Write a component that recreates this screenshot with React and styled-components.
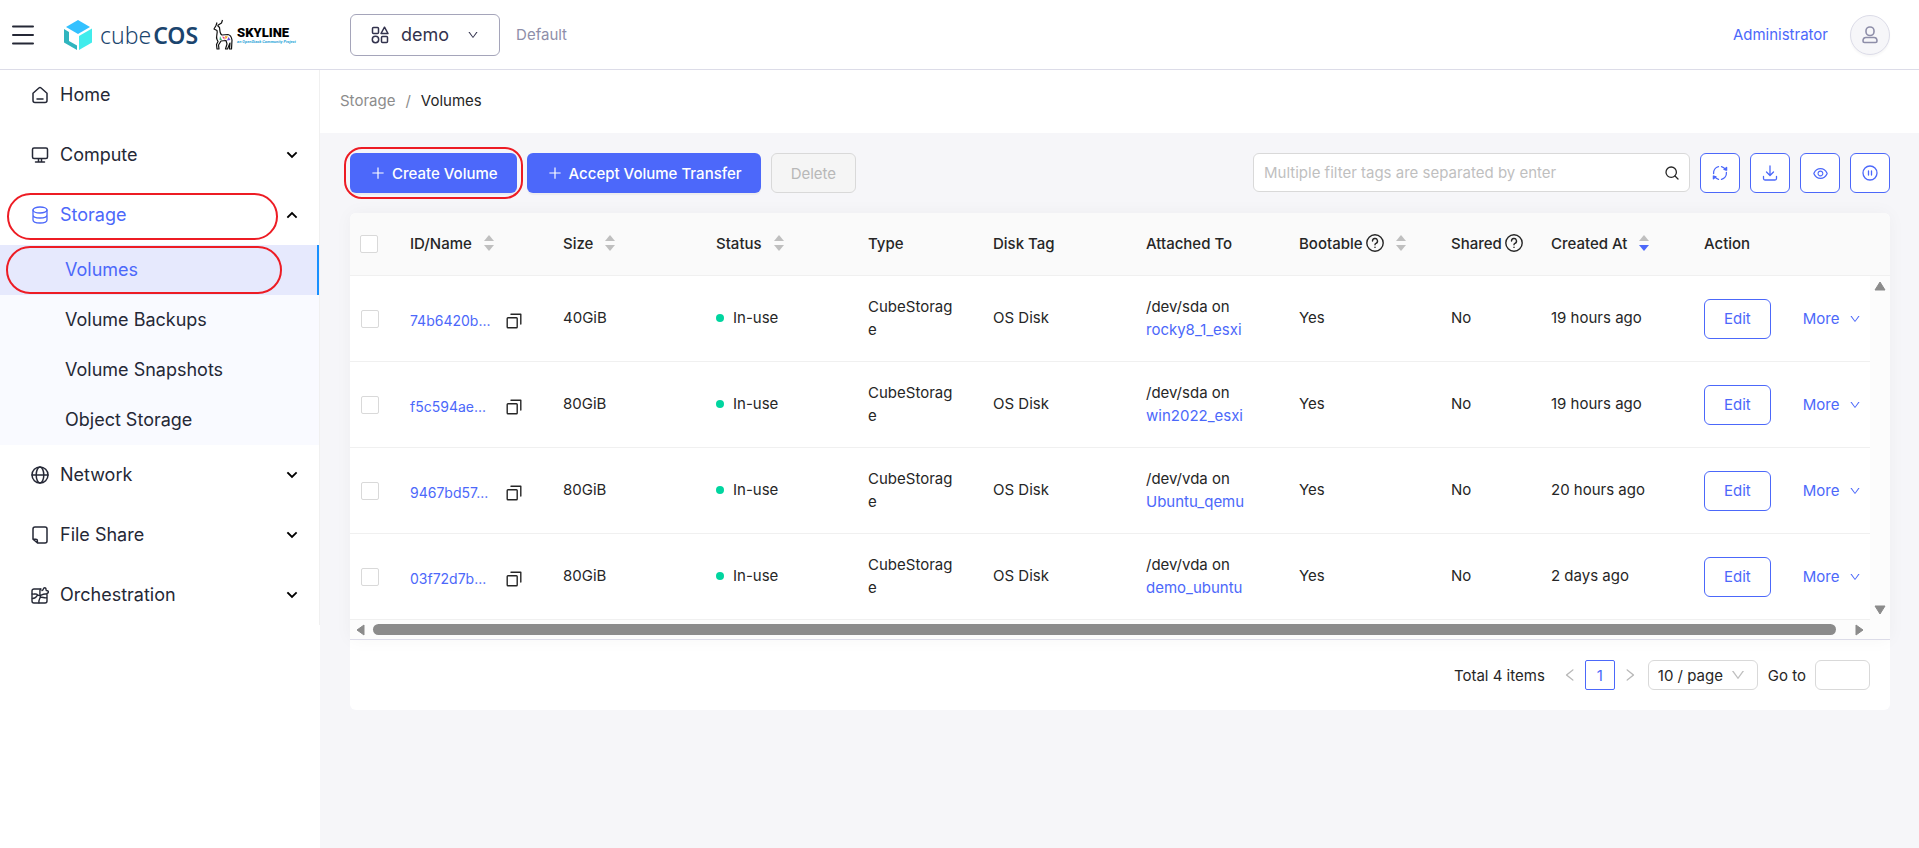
import React, { useState } from 'react'
import styled, { createGlobalStyle, css } from 'styled-components'
import { AiOutlineDown, AiOutlineLeft, AiOutlinePlus, AiOutlineRight, AiOutlineEye } from 'react-icons/ai'

const volumes = [
    { id: '74b6420b...', size: '40GiB', device: '/dev/sda', server: 'rocky8_1_esxi', created: '19 hours ago' },
    { id: 'f5c594ae...', size: '80GiB', device: '/dev/sda', server: 'win2022_esxi', created: '19 hours ago' },
    { id: '9467bd57...', size: '80GiB', device: '/dev/vda', server: 'Ubuntu_qemu', created: '20 hours ago' },
    { id: '03f72d7b...', size: '80GiB', device: '/dev/vda', server: 'demo_ubuntu', created: '2 days ago' },
]

const columns = [
    { title: 'ID/Name', width: 153, sort: true },
    { title: 'Size', width: 153, sort: true },
    { title: 'Status', width: 152, sort: true },
    { title: 'Type', width: 125 },
    { title: 'Disk Tag', width: 153 },
    { title: 'Attached To', width: 153 },
    { title: 'Bootable', width: 152, help: true, sort: true },
    { title: 'Shared', width: 100, help: true },
    { title: 'Created At', width: 153, sort: true, sorted: true },
    { title: 'Action', width: 176 },
]

const storageItems = ['Volumes', 'Volume Backups', 'Volume Snapshots', 'Object Storage']

// icons

const Line = ({ size = 18, width = 1.5, box = 18, children }) => (
    <svg
        width={size}
        height={size}
        viewBox={`0 0 ${box} ${box}`}
        fill="none"
        stroke="currentColor"
        strokeWidth={width}
        strokeLinecap="round"
        strokeLinejoin="round"
        aria-hidden="true"
    >
        {children}
    </svg>
)

const MenuIcon = () => (
    <Line size={24} box={24} width={2}>
        <path d="M2 3.500h20M2 12h20M2 20.500h20" />
    </Line>
)

const HomeIcon = () => (
    <Line>
        <path d="M2 7.2 7.9 2a1.7 1.7 0 0 1 2.2 0L16 7.2v7.3a2 2 0 0 1-2 2H4a2 2 0 0 1-2-2zM6 13h6" />
    </Line>
)

const ComputeIcon = () => (
    <Line>
        <rect x="1.5" y="2" width="15" height="10.5" rx="1.5" />
        <path d="M7.5 13v2.5M10.5 13v2.5M4.5 16h9" />
    </Line>
)

const StorageIcon = () => (
    <Line width={1.3}>
        <ellipse cx="9" cy="4" rx="7" ry="3" />
        <path d="M2 4v10c0 1.7 3.1 3 7 3s7-1.3 7-3V4M2 9c0 1.700 3.100 3 7 3s7-1.300 7-3" />
    </Line>
)

const NetworkIcon = () => (
    <Line>
        <circle cx="9" cy="9" r="8" />
        <ellipse cx="9" cy="9" rx="3.8" ry="8" />
        <path d="M1 9h16" />
    </Line>
)

const FileIcon = () => (
    <Line>
        <path d="M6.5 17H14a2 2 0 0 0 2-2V3a2 2 0 0 0-2-2H4a2 2 0 0 0-2 2v10.2L6.5 17zM2.3 13.2h2.6a1.5 1.5 0 0 1 1.5 1.5V17" />
    </Line>
)

const OrchestrationIcon = () => (
    <Line width={1.4}>
        <path d="M10 3H3a2 2 0 0 0-2 2v10a2 2 0 0 0 2 2h11a2 2 0 0 0 2-2V9" />
        <path d="M11 4.500c1-.2 1.200-.8 1.400-1.700.3-1.500 2.400-1.500 2.600 0 0 .8-.1 1.200.3 1.600s1 .3 1.500.5c.9.500.7 2-.4 2.300-.6.200-.8.600-.6 1.200" />
        <path d="M1.200 8c1.800.6 2.800-.6 4.300.2s1.800 1.500 3.500 1.300 2.800-2 6-1.500M9.500 3.200c-1.200 1.500-.3 2.600-.6 4s1 2.300.3 4.300-1.800 2.500-1.200 5.300M1.500 12.500c2 0 4-1.500 5-3.500M9.300 11.500c1.700-1 3.500.7 6.200.3" />
    </Line>
)

const ProjectIcon = () => (
    <Line>
        <rect x="1.5" y="1.5" width="6" height="6" rx="1" />
        <path d="M13.5 1.2 17 7.5h-7z" />
        <circle cx="4.5" cy="13.5" r="3.2" />
        <rect x="10.5" y="10.5" width="6" height="6" rx="1" />
    </Line>
)

const UserIcon = () => (
    <Line width={1.6}>
        <rect x="5" y="1" width="8" height="8.5" rx="3.8" />
        <path d="M5 11.5h8c1.6 0 3 1.5 3 3.5 0 1-.5 1.5-1.5 1.5h-11c-1 0-1.5-.5-1.5-1.5 0-2 1.4-3.5 3-3.5z" />
    </Line>
)

const ArrowIcon = ({ up }) => (
    <Line size={14} box={14} width={1.8}>
        <path d={up ? 'M3 9l4-4 4 4' : 'M3 5l4 4 4-4'} strokeLinecap="square" strokeLinejoin="miter" />
    </Line>
)

const SearchIcon = () => (
    <Line size={14} box={14} width={1.3}>
        <circle cx="6.2" cy="6.2" r="5.2" />
        <path d="M10 10l3 3" />
    </Line>
)

const RefreshIcon = () => (
    <Line size={16} box={16} width={1.3}>
        <path d="M6.5 14.3A6.5 6.5 0 0 1 2.600 11.500M1.6 8.500A6.5 6.5 0 0 1 6.5 1.7M9.500 1.700a6.5 6.5 0 0 1 4 3M14.400 7.500A6.500 6.500 0 0 1 9.500 14.300" />
        <path d="M14.600 2.400v2.800l-2.600-.8zM1.400 13.800v-2.800l2.600.8z" fill="currentColor" />
    </Line>
)

const DownloadIcon = () => (
    <Line size={16} box={16} width={1.3}>
        <path d="M8 1v9M4.5 7 8 10.5 11.5 7M1.5 11.5v2A1.5 1.5 0 0 0 3 15h10a1.5 1.5 0 0 0 1.5-1.5v-2" />
    </Line>
)

const PauseIcon = () => (
    <Line size={16} box={16} width={1.3}>
        <circle cx="8" cy="8" r="7" />
        <path d="M6.5 6v4M9.5 6v4" />
    </Line>
)

const QuestionIcon = () => (
    <Line width={1.4}>
        <circle cx="9" cy="9" r="8.2" />
        <path d="M6.5 7a2.5 2.5 0 1 1 3.5 2.3c-.7.3-1 .8-1 1.5M9 13.3v.1" />
    </Line>
)

const CopyIcon = () => (
    <Line size={16} box={16} width={1.4}>
        <rect x="1.2" y="4.8" width="10" height="10" rx=".8" />
        <path d="M5 1.2h9.8V11" />
    </Line>
)

const Triangle = ({ direction }) => {
    const points = {
        up: '7,3 12,11 2,11',
        down: '2,3 12,3 7,11',
        left: '4,7 11,2 11,12',
        right: '3,2 10,7 3,12',
    }
    return (
        <svg width="14" height="14" viewBox="0 0 14 14" fill="#8b8b8b" stroke="#8b8b8b" strokeLinejoin="round" aria-hidden="true">
            <polygon points={points[direction]} />
        </svg>
    )
}

const Sorter = ({ active }) => (
    <svg width="10" height="16" viewBox="0 0 10 16" aria-hidden="true">
        <path d="M5 0l5 6H0z" fill="#bfbfbf" />
        <path d="M5 16l5-6H0z" fill={active ? '#4c68fa' : '#bfbfbf'} />
    </svg>
)

const CubeLogo = () => (
    <svg width="28" height="30" viewBox="0 0 28 30" aria-hidden="true">
        <path d="M14 0l12 7-12 7L2 7z" fill="#33c1ff" />
        <path d="M0 9l5 3v9l8 4.500V30L0 22.500z" fill="#30b5be" />
        <path d="M15 16l13-7.500v14L15 30z" fill="#41ecec" />
    </svg>
)

const DeerLogo = () => (
    <svg width="20" height="31" viewBox="0 0 20 31" fill="none" stroke="#111" strokeWidth="1.2" strokeLinejoin="round" aria-hidden="true">
        <path d="M9.5 1 8.500 4 4.500 6.500M4 3.500 3 6.500 1 10l3 1.500c1 3-1.500 6 0 9l1 2-1.500 3 .5 4.500h2l-.5-4 2.500-4 5-.5 1 3.500-1.500 5h2l2.500-6-.5 6h2l.5-9c-.5-3-1.500-5-4-5.500L9 16c-2.500-1-2-5-2.500-7.500L4.500 6.500" />
        <path d="M9 17.500l2.500.5v3z" fill="#e63b7a" stroke="none" />
        <path d="M12 17l3 .5-2.500 3z" fill="#f5a623" stroke="none" />
        <path d="M15.500 18l2 3-3.500.5z" fill="#6a4bd8" stroke="none" />
        <path d="M7 17l2 4H6.500z" fill="#42b983" stroke="none" />
    </svg>
)

// components

const NavEntry = ({ icon, label, expanded, active, marked }) => (
    <NavButton type="button" $active={active} aria-expanded={expanded}>
        {icon}
        <NavLabel>{label}</NavLabel>
        {expanded !== undefined && <NavArrow><ArrowIcon up={expanded} /></NavArrow>}
        {marked && <StorageMark />}
    </NavButton>
)

const Sidebar = () => (
    <Aside>
        <Nav>
            <NavEntry icon={<HomeIcon />} label="Home" />
            <NavEntry icon={<ComputeIcon />} label="Compute" expanded={false} />
            <NavEntry icon={<StorageIcon />} label="Storage" expanded active marked />
            <SubNav>
                {storageItems.map((item) => (
                    <SubNavLink href="#" key={item} $active={item === 'Volumes'}>
                        {item}
                        {item === 'Volumes' && <VolumesMark />}
                    </SubNavLink>
                ))}
            </SubNav>
            <NavEntry icon={<NetworkIcon />} label="Network" expanded={false} />
            <NavEntry icon={<FileIcon />} label="File Share" expanded={false} />
            <NavEntry icon={<OrchestrationIcon />} label="Orchestration" expanded={false} />
        </Nav>
    </Aside>
)

const TopBar = () => (
    <Header>
        <MenuButton type="button" aria-label="Toggle menu"><MenuIcon /></MenuButton>
        <Brand href="#">
            <CubeLogo />
            <BrandName>cube<b>COS</b></BrandName>
            <DeerLogo />
            <Skyline>
                <strong>SKYLINE</strong>
                <em>an OpenStack Community Project</em>
            </Skyline>
        </Brand>
        <ProjectButton type="button">
            <ProjectIcon />
            <span>demo</span>
            <AiOutlineDown size={12} />
        </ProjectButton>
        <Region>Default</Region>
        <UserLink href="#">Administrator</UserLink>
        <Avatar type="button" aria-label="Account"><UserIcon /></Avatar>
    </Header>
)

const Columns = () => (
    <colgroup>
        <col width={50} />
        {columns.map((column) => <col key={column.title} width={column.width} />)}
    </colgroup>
)

const VolumeRow = ({ volume, checked, toggle }) => (
    <tr>
        <CheckCell>
            <Checkbox type="checkbox" aria-label={`Select ${volume.id}`} checked={checked} onChange={toggle} />
        </CheckCell>
        <Td>
            <IdBox>
                <Link href="#">{volume.id}</Link>
                <CopyButton type="button" aria-label="Copy ID"><CopyIcon /></CopyButton>
            </IdBox>
        </Td>
        <Td>{volume.size}</Td>
        <Td><Status>In-use</Status></Td>
        <TypeCell>CubeStorage</TypeCell>
        <Td>OS Disk</Td>
        <Td>{volume.device} on<br /><Link href="#">{volume.server}</Link></Td>
        <Td>Yes</Td>
        <Td>No</Td>
        <Td>{volume.created}</Td>
        <ActionCell>
            <Actions>
                <EditButton type="button">Edit</EditButton>
                <MoreButton type="button">More <AiOutlineDown size={12} /></MoreButton>
            </Actions>
        </ActionCell>
    </tr>
)

const VolumeTable = () => {
    const [selected, changeSelected] = useState([])
    const allSelected = selected.length === volumes.length

    const toggle = (id) => {
        changeSelected(selected.includes(id) ? selected.filter((item) => item !== id) : [...selected, id])
    }

    return (
        <TableBox>
            <TableHead>
                <Table>
                    <Columns />
                    <thead>
                        <tr>
                            <HeadCheckCell>
                                <Checkbox
                                    type="checkbox"
                                    aria-label="Select all"
                                    checked={allSelected}
                                    onChange={() => changeSelected(allSelected ? [] : volumes.map((v) => v.id))}
                                />
                            </HeadCheckCell>
                            {columns.map((column) => (
                                <Th key={column.title} scope="col">
                                    <HeadBox>
                                        <HeadTitle>{column.title}{column.help && <QuestionIcon />}</HeadTitle>
                                        {column.sort && <Sorter active={column.sorted} />}
                                    </HeadBox>
                                </Th>
                            ))}
                        </tr>
                    </thead>
                </Table>
            </TableHead>
            <TableBody>
                <Table>
                    <Columns />
                    <tbody>
                        {volumes.map((volume) => (
                            <VolumeRow
                                key={volume.id}
                                volume={volume}
                                checked={selected.includes(volume.id)}
                                toggle={() => toggle(volume.id)}
                            />
                        ))}
                    </tbody>
                </Table>
                <ScrollColumn>
                    <ScrollButton type="button" aria-label="Scroll up"><Triangle direction="up" /></ScrollButton>
                    <ScrollButton type="button" aria-label="Scroll down"><Triangle direction="down" /></ScrollButton>
                </ScrollColumn>
            </TableBody>
            <ScrollRow>
                <ScrollButton type="button" aria-label="Scroll left"><Triangle direction="left" /></ScrollButton>
                <ScrollThumb />
                <ScrollButton type="button" aria-label="Scroll right"><Triangle direction="right" /></ScrollButton>
            </ScrollRow>
        </TableBox>
    )
}

const Pagination = () => (
    <Pager>
        <span>Total 4 items</span>
        <PageArrows>
            <PageButton type="button" aria-label="Previous page"><AiOutlineLeft size={16} /></PageButton>
            <PageButton type="button" $current>1</PageButton>
            <PageButton type="button" aria-label="Next page"><AiOutlineRight size={16} /></PageButton>
        </PageArrows>
        <SelectBox>
            <PageSelect aria-label="Page size">
                <option>10 / page</option>
                <option>20 / page</option>
                <option>50 / page</option>
            </PageSelect>
            <AiOutlineDown size={16} />
        </SelectBox>
        <GoTo>
            Go to
            <GoToInput type="text" />
        </GoTo>
    </Pager>
)

const App = () => {
    const [filter, changeFilter] = useState('')

    return (
        <Page>
            <GlobalStyle />
            <TopBar />
            <Body>
                <Sidebar />
                <Main>
                    <Breadcrumb aria-label="Breadcrumb">
                        <a href="#">Storage</a>
                        <span>/</span>
                        <strong>Volumes</strong>
                    </Breadcrumb>
                    <Content>
                        <Toolbar>
                            <PrimaryButton type="button">
                                <AiOutlinePlus size={16} /> Create Volume
                                <CreateMark />
                            </PrimaryButton>
                            <PrimaryButton type="button"><AiOutlinePlus size={16} /> Accept Volume Transfer</PrimaryButton>
                            <DeleteButton type="button" disabled>Delete</DeleteButton>
                            <SearchBox>
                                <SearchInput
                                    type="text"
                                    aria-label="Filter volumes"
                                    placeholder="Multiple filter tags are separated by enter"
                                    value={filter}
                                    onChange={(e) => changeFilter(e.target.value)}
                                />
                                <SearchIcon />
                            </SearchBox>
                            <IconButton type="button" aria-label="Refresh"><RefreshIcon /></IconButton>
                            <IconButton type="button" aria-label="Download"><DownloadIcon /></IconButton>
                            <IconButton type="button" aria-label="Visible columns"><AiOutlineEye size={17} /></IconButton>
                            <IconButton type="button" aria-label="Pause updates"><PauseIcon /></IconButton>
                        </Toolbar>
                        <Card>
                            <VolumeTable />
                            <Pagination />
                        </Card>
                    </Content>
                </Main>
            </Body>
        </Page>
    )
}

const GlobalStyle = createGlobalStyle`
    * {
        box-sizing: border-box;
    }

    body {
        margin: 0;
        background: #f6f6f9;
        color: #262626;
        font-family: Inter, "Liberation Sans", sans-serif;
        font-size: 15px;
        line-height: 23px;
    }

    button, input, select {
        font: inherit;
        color: inherit;
    }

    button {
        cursor: pointer;
    }

    a {
        text-decoration: none;
    }

    svg {
        flex: none;
    }
`

const bareButton = css`
    display: flex;
    align-items: center;
    padding: 0;
    border: 0;
    background: none;
`

const Page = styled.div`
    display: flex;
    flex-direction: column;
    min-height: 100vh;
`

const Header = styled.header`
    display: flex;
    align-items: center;
    height: 70px;
    padding: 0 29px 0 11px;
    border-bottom: 1px solid #dcdce8;
    background: #fff;
`

const MenuButton = styled.button`
    ${bareButton}
    color: #252836;
`

const Brand = styled.a`
    display: flex;
    align-items: center;
    width: 286px;
    margin-left: 29px;
    color: #1b456e;
`

const BrandName = styled.span`
    margin: 0 15px 0 8px;
    font: 300 23px/30px "Noto Sans", "Open Sans", sans-serif;

    b {
        margin-left: 2px;
        font-weight: 600;
    }
`

const Skyline = styled.span`
    display: flex;
    flex-direction: column;
    margin-left: 4px;
    font-family: Roboto, sans-serif;

    strong {
        color: #000;
        font-size: 13px;
        font-weight: 900;
        line-height: 13px;
    }

    em {
        color: #2aa5d8;
        font-size: 4px;
        font-weight: 700;
        line-height: 5px;
        white-space: nowrap;
    }
`

const ProjectButton = styled.button`
    display: flex;
    align-items: center;
    gap: 12px;
    height: 42px;
    padding: 0 20px;
    border: 1px solid #a5a5ba;
    border-radius: 6px;
    background: #fff;
    color: #32324d;
    font-size: 18px;

    svg:last-child {
        margin-left: 6px;
    }
`

const Region = styled.span`
    margin-left: 16px;
    color: #8e8ea9;
`

const UserLink = styled.a`
    margin-left: auto;
    color: #4c68fa;
`

const Avatar = styled.button`
    display: flex;
    align-items: center;
    justify-content: center;
    width: 40px;
    height: 40px;
    margin-left: 22px;
    padding: 0;
    border: 1px solid #dcdce8;
    border-radius: 50%;
    background: #f6f6f9;
    color: #8e8ea9;
    box-shadow: 0 2px 2px rgba(0, 0, 0, 0.03);
`

const Body = styled.div`
    display: flex;
    flex: 1;
`

const Aside = styled.aside`
    flex: 0 0 320px;
    background: #fff;
`

const Nav = styled.nav`
    display: flex;
    flex-direction: column;
    gap: 10px;
    padding-bottom: 5px;
    border-right: 1px solid #f0f0f0;
`

const NavButton = styled.button`
    position: relative;
    display: flex;
    align-items: center;
    gap: 11px;
    height: 50px;
    padding: 0 20px 0 31px;
    border: 0;
    background: none;
    color: ${({ $active }) => ($active ? '#4c68fa' : '#252836')};
    font-size: 18px;
    text-align: left;
`

const NavLabel = styled.span`
    flex: 1;
    padding-bottom: 2px;
`

const NavArrow = styled.span`
    display: flex;
    color: #000;
`

const SubNav = styled.div`
    margin: -5px 0;
    background: #f9faff;
`

const SubNavLink = styled.a`
    position: relative;
    display: flex;
    align-items: center;
    height: 50px;
    padding: 0 0 2px 65px;
    border-right: 2px solid ${({ $active }) => ($active ? '#1890ff' : 'transparent')};
    background: ${({ $active }) => ($active ? '#e6e9fd' : 'none')};
    color: ${({ $active }) => ($active ? '#4c68fa' : '#252836')};
    font-size: 18px;
`

// red outlines drawn over the steps to follow
const Mark = styled.span`
    position: absolute;
    border: 2px solid #ed1c24;
    pointer-events: none;
`

const StorageMark = styled(Mark)`
    inset: 3px 41px 0 7px;
    border-radius: 28px;
`

const VolumesMark = styled(Mark)`
    inset: 1px 35px 1px 6px;
    border-radius: 28px;
`

const CreateMark = styled(Mark)`
    inset: -6px;
    border-radius: 18px;
`

const Main = styled.main`
    flex: 1;
    min-width: 0;
`

const Breadcrumb = styled.nav`
    display: flex;
    align-items: center;
    gap: 10px;
    height: 63px;
    padding: 0 0 2px 20px;
    background: #fff;
    color: #8c8c8c;

    a {
        color: inherit;
    }

    strong {
        color: #262626;
        font-weight: 400;
    }
`

const Content = styled.div`
    padding: 20px 29px 20px 30px;
`

const Toolbar = styled.div`
    display: flex;
    gap: 10px;
    margin-bottom: 20px;
`

const PrimaryButton = styled.button`
    position: relative;
    display: flex;
    align-items: center;
    gap: 6px;
    height: 40px;
    padding: 0 19px 0 20px;
    border: 0;
    border-radius: 6px;
    background: #4c68fa;
    color: #fff;
    font-weight: 500;
    white-space: nowrap;
    box-shadow: 0 2px 1px rgba(0, 0, 0, 0.04);
`

const DeleteButton = styled.button`
    height: 40px;
    padding: 0 19px;
    border: 1px solid #d9d9d9;
    border-radius: 6px;
    background: #f5f5f5;
    color: #b8b8b8;
    cursor: default;
`

const SearchBox = styled.div`
    display: flex;
    align-items: center;
    width: 437px;
    height: 39px;
    margin-left: auto;
    padding: 0 10px;
    border: 1px solid #d9d9d9;
    border-radius: 6px;
    background: #fff;
`

const SearchInput = styled.input`
    flex: 1;
    min-width: 0;
    padding: 0;
    border: 0;
    outline: 0;
    background: none;

    &::placeholder {
        color: #bfbfbf;
    }
`

const IconButton = styled.button`
    display: flex;
    align-items: center;
    justify-content: center;
    width: 40px;
    height: 40px;
    padding: 0;
    border: 1px solid #4c68fa;
    border-radius: 6px;
    background: #fff;
    color: #4c68fa;
`

const Card = styled.section`
    border-radius: 6px;
    background: #fff;
`

const TableBox = styled.div`
    border-bottom: 1px solid #dcdce8;
    border-radius: 6px 6px 0 0;
    box-shadow: 0 0 18px rgba(0, 0, 0, 0.04);
`

const TableHead = styled.div`
    padding-right: 20px;
    border-bottom: 1px solid #f0f0f0;
    border-radius: 6px 6px 0 0;
    background: #fafafa;
`

const TableBody = styled.div`
    display: grid;
    grid-template-columns: minmax(0, 1fr) 20px;
`

const Table = styled.table`
    width: 100%;
    border-collapse: separate;
    border-spacing: 0;
    table-layout: fixed;
`

const Th = styled.th`
    height: 62px;
    padding: 0 10px 2px;
    font-weight: 500;
    text-align: left;
`

const HeadBox = styled.div`
    display: flex;
    align-items: center;
    gap: 12px;
`

const HeadTitle = styled.span`
    display: flex;
    align-items: center;
    gap: 3px;
    white-space: nowrap;
`

const Td = styled.td`
    height: 86px;
    padding: 0 10px 2px;
    border-bottom: 1px solid #f0f0f0;
`

const TypeCell = styled(Td)`
    padding-right: 28px;
    word-break: break-all;
`

const ActionCell = styled(Td)`
    padding-bottom: 0;
`

const HeadCheckCell = styled(Th)`
    padding-bottom: 0;
    line-height: 0;
`

const CheckCell = styled(Td)`
    padding: 0 11px;
    line-height: 0;
`

const Checkbox = styled.input`
    width: 18px;
    height: 18px;
    margin: 0;
    border: 1px solid #d9d9d9;
    border-radius: 2px;
    background: #fff;
    appearance: none;

    &:checked {
        border-color: #4c68fa;
        background: #4c68fa;
    }
`

const IdBox = styled.div`
    display: flex;
    align-items: center;
    justify-content: space-between;
    width: 112px;
    padding-top: 6px;
    font-size: 14px;
`

const Link = styled.a`
    color: #4c68fa;
`

const CopyButton = styled.button`
    ${bareButton}
`

const Status = styled.span`
    display: flex;
    align-items: center;
    gap: 9px;

    &::before {
        content: '';
        width: 8px;
        height: 8px;
        border-radius: 50%;
        background: #00d59f;
    }
`

const Actions = styled.div`
    display: flex;
    align-items: center;
    gap: 32px;
`

const EditButton = styled.button`
    height: 40px;
    padding: 0 19px;
    border: 1px solid #4c68fa;
    border-radius: 6px;
    background: #fff;
    color: #4c68fa;
`

const MoreButton = styled.button`
    ${bareButton}
    gap: 10px;
    color: #4c68fa;
`

const ScrollColumn = styled.div`
    display: flex;
    flex-direction: column;
    justify-content: space-between;
    align-items: center;
    padding: 3px 0;
    background: #fcfcfc;
`

const ScrollRow = styled.div`
    display: flex;
    align-items: center;
    gap: 6px;
    height: 19px;
    padding: 0 23px 0 3px;
    background: #fcfcfc;
`

const ScrollButton = styled.button`
    ${bareButton}
    justify-content: center;
    flex: 0 0 14px;
    height: 16px;
`

const ScrollThumb = styled.div`
    flex: 1;
    height: 11px;
    margin-right: 11px;
    border-radius: 6px;
    background: #8b8b8b;
`

const Pager = styled.footer`
    display: flex;
    align-items: center;
    justify-content: flex-end;
    gap: 10px;
    padding: 20px;
`

const PageArrows = styled.div`
    display: flex;
    align-items: center;
    margin-right: -7px;
`

const PageButton = styled.button`
    display: flex;
    align-items: center;
    justify-content: center;
    width: 30px;
    height: 30px;
    padding: 0;
    border: 1px solid ${({ $current }) => ($current ? '#4c68fa' : 'transparent')};
    border-radius: 2px;
    background: #fff;
    color: ${({ $current }) => ($current ? '#4c68fa' : '#b8b8b8')};
`

const SelectBox = styled.div`
    display: grid;
    grid-template-columns: 1fr 28px;
    align-items: center;
    width: 110px;
    height: 30px;

    svg {
        grid-area: 1 / 2;
        color: #bfbfbf;
        pointer-events: none;
    }
`

const PageSelect = styled.select`
    grid-area: 1 / 1 / 2 / 3;
    height: 30px;
    padding: 0 9px;
    border: 1px solid #d9d9d9;
    border-radius: 6px;
    background: #fff;
    appearance: none;
`

const GoTo = styled.label`
    display: flex;
    align-items: center;
    gap: 9px;
`

const GoToInput = styled.input`
    width: 55px;
    height: 30px;
    padding: 0 8px;
    border: 1px solid #d9d9d9;
    border-radius: 6px;
    background: #fff;
`

export default App
